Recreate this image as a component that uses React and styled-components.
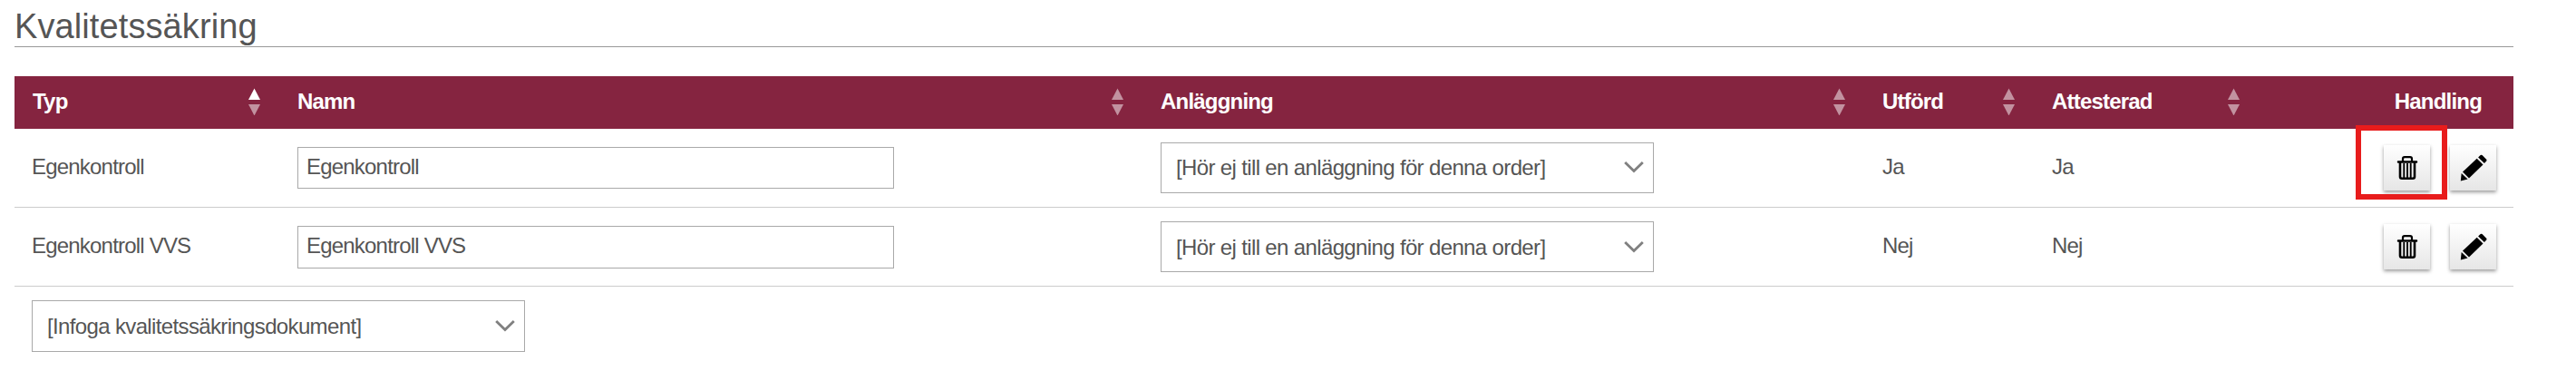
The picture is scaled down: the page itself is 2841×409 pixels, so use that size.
import React from "react";
import styled, { createGlobalStyle } from "styled-components";

const rows = [
  { id: 1, typ: "Egenkontroll", utford: "Ja", attesterad: "Ja", marked: true },
  { id: 2, typ: "Egenkontroll VVS", utford: "Nej", attesterad: "Nej", low: true },
];

const columns = [
  { title: "Typ", sorted: true },
  { title: "Namn" },
  { title: "Anläggning" },
  { title: "Utförd" },
  { title: "Attesterad" },
];

function Sorter({ sorted }) {
  return (
    <SortIcon viewBox="0 0 13 31">
      <path d="M6.5 1.5L13 14H0z" opacity={sorted ? 1 : 0.5} />
      <path d="M0 19h13L6.5 31.500z" opacity="0.5" />
    </SortIcon>
  );
}

function Dropdown({ label, tall, low }) {
  return (
    <Select $tall={tall} $low={low}>
      <SelectText>{label}</SelectText>
      <Chevron viewBox="0 0 22 13">
        <path d="M1.2 1L11 10.5L20.8 1" />
      </Chevron>
    </Select>
  );
}

function Trash() {
  return (
    <Icon width="24" height="28" viewBox="0 0 24 28">
      <path d="M7 7V4.2Q7 2.1 9 2.1H15Q17 2.1 17 4.2V7" fill="none" stroke="#000" strokeWidth="2.2" />
      <rect x="0.800" y="6.300" width="22.400" height="2.500" rx="1" />
      <path d="M4 8V23.800Q4 25.800 6 25.800H18Q20 25.800 20 23.800V8" fill="none" stroke="#000" strokeWidth="2.600" />
      <path d="M8.300 9V25M12 9V25M15.700 9V25" fill="none" stroke="#000" strokeWidth="1.900" />
    </Icon>
  );
}

function Pencil() {
  return (
    <Icon width="30" height="30" viewBox="0 0 30 30">
      <path d="M0.800 29.500L1.700 20.900L8.600 27.400z" />
      <path d="M3 19.400L18.700 4.700L25.500 11.500L10 26.500z" />
      <path d="M20.100 3.400L22.700 0.900Q23.600 0.300 24.500 1.100L29.200 5.800Q29.900 6.800 29.200 7.600L26.900 10z" />
    </Icon>
  );
}

export default function App() {
  return (
    <Page>
      <GlobalStyle />
      <Title>Kvalitetssäkring</Title>
      <Header>
        {columns.map((col) => (
          <HeadCell key={col.title}>
            {col.title}
            <Sorter sorted={col.sorted} />
          </HeadCell>
        ))}
        <ActionHead>Handling</ActionHead>
      </Header>
      {rows.map((row) => (
        <Row key={row.id}>
          <Cell>{row.typ}</Cell>
          <Field>
            <Input defaultValue={row.typ} $low={row.low} />
          </Field>
          <Field>
            <Dropdown label="[Hör ej till en anläggning för denna order]" low={row.low} />
          </Field>
          <StatusCell>{row.utford}</StatusCell>
          <StatusCell>{row.attesterad}</StatusCell>
          <Actions>
            <Button aria-label="Ta bort">
              <Trash />
              {row.marked && <Marker />}
            </Button>
            <Button aria-label="Redigera">
              <Pencil />
            </Button>
          </Actions>
        </Row>
      ))}
      <Footer>
        <Dropdown label="[Infoga kvalitetssäkringsdokument]" tall />
      </Footer>
    </Page>
  );
}

const GlobalStyle = createGlobalStyle`
  * {
    box-sizing: border-box;
  }
  body {
    margin: 0;
    background: #fff;
    color: #555;
    font-family: "Liberation Sans", Arial, sans-serif;
    font-size: 24px;
    line-height: 27px;
    letter-spacing: -0.8px;
  }
`;
const Page = styled.div`
  width: 2756px;
  margin-left: 16px;
`;
const Title = styled.h1`
  height: 52px;
  margin: 0 0 32px;
  padding-top: 8px;
  border-bottom: 1px solid #999;
  font-size: 38px;
  font-weight: 400;
  line-height: 42px;
  letter-spacing: 0.1px;
`;
const Header = styled.div`
  display: grid;
  grid-template-columns: 292px 952px 796px 187px 248px 1fr;
  height: 58px;
  background: #852440;
  color: #fff;
  font-weight: 700;
`;
const HeadCell = styled.div`
  display: flex;
  align-items: center;
  justify-content: space-between;
  padding: 0 21px 3px 20px;
`;
const ActionHead = styled(HeadCell)`
  justify-content: flex-end;
  padding-right: 35px;
`;
const SortIcon = styled.svg`
  width: 13px;
  height: 31px;
  fill: #fff;
`;
const Row = styled.div`
  display: grid;
  grid-template-columns: 292px 952px 796px 187px 248px 1fr;
  align-items: center;
  height: 87px;
  border-bottom: 1px solid #ccc;
`;
const Cell = styled.div`
  padding: 0 0 3px 19px;
`;
const StatusCell = styled(Cell)`
  padding-left: 20px;
`;
const Field = styled.div`
  padding-left: 20px;
`;
const Input = styled.input`
  display: block;
  width: 658px;
  height: ${(p) => (p.$low ? 47 : 46)}px;
  margin: ${(p) => (p.$low ? "1px 0 0" : 0)};
  padding: 0 9px 3px;
  border: 1px solid #a9a9a9;
  background: #fff;
  color: inherit;
  font: inherit;
  letter-spacing: inherit;
`;
const Select = styled.div`
  display: flex;
  align-items: center;
  justify-content: space-between;
  width: 544px;
  height: ${(p) => (p.$tall ? 57 : 56)}px;
  padding: ${(p) => (p.$low ? "1px 10px 0 16px" : p.$tall ? "0 10px 0 16px" : "0 10px 1px 16px")};
  border: 1px solid #a9a9a9;
  letter-spacing: -0.64px;
`;
const SelectText = styled.span`
  white-space: nowrap;
`;
const Chevron = styled.svg`
  width: 22px;
  height: 13px;
  fill: none;
  stroke: #808080;
  stroke-width: 2.8;
`;
const Actions = styled.div`
  display: flex;
  justify-content: flex-end;
  gap: 22px;
  padding-right: 19px;
`;
const Button = styled.button`
  position: relative;
  display: flex;
  align-items: center;
  justify-content: center;
  width: 51px;
  height: 50px;
  padding: 0;
  border: 0;
  background: linear-gradient(#fff, #e6e6e6);
  box-shadow: 0 2px 4px rgba(0, 0, 0, 0.4);
`;
const Icon = styled.svg`
  display: block;
  fill: #000;
`;
const Marker = styled.span`
  position: absolute;
  z-index: 1;
  left: -31px;
  top: -22px;
  width: 101px;
  height: 82px;
  border: 6px solid #e81c1c;
`;
const Footer = styled.div`
  padding: 15px 0 0 19px;
`;
